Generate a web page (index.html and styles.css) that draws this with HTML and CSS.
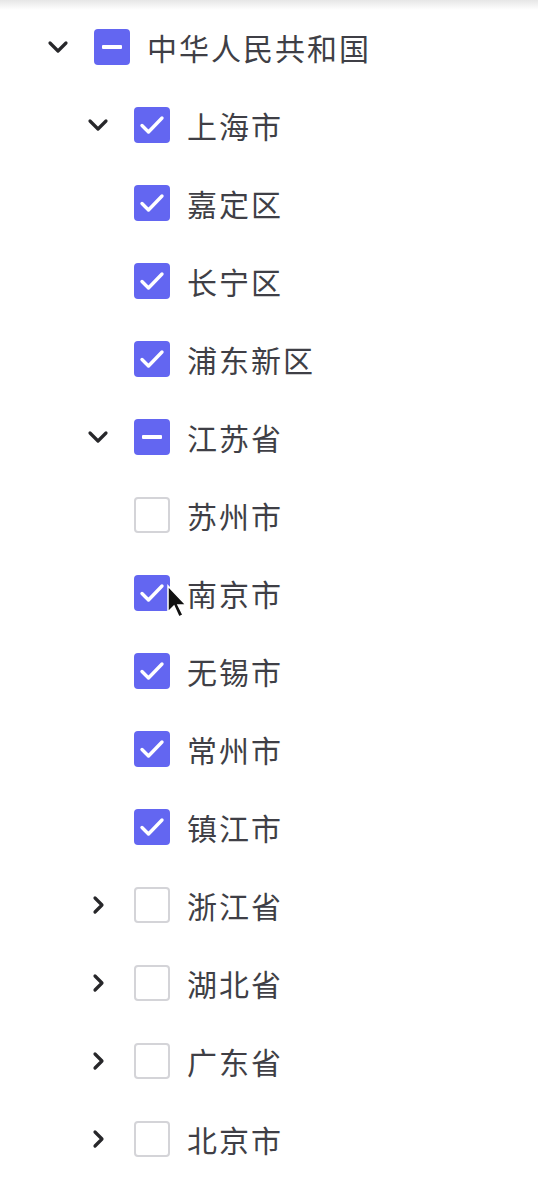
FILE: index.html
```html
<!DOCTYPE html>
<html lang="zh-CN">
<head>
    <meta charset="UTF-8" />
    <meta name="viewport" content="width=device-width, initial-scale=1.0" />
    <title>Tree</title>
    <link rel="stylesheet" href="styles.css">
</head>
<body>
    <div class="tree">
        <ul class="tree-list">
            <li>
                <div class="tree-row">
                    <span class="toggle"><svg viewBox="0 0 24 24"><path d="M4 8l8 8 8-8" /></svg></span>
                    <span class="box partial"></span>
                    <span class="label">中华人民共和国</span>
                </div>
                <ul class="tree-list children">
                    <li>
                        <div class="tree-row">
                            <span class="toggle"><svg viewBox="0 0 24 24"><path d="M4 8l8 8 8-8" /></svg></span>
                            <span class="box checked"><svg viewBox="0 0 36 36"><path d="M8 18.5l6.5 6.5L28 11" /></svg></span>
                            <span class="label">上海市</span>
                        </div>
                        <ul class="tree-list children">
                            <li><div class="tree-row leaf"><span class="box checked"><svg viewBox="0 0 36 36"><path d="M8 18.5l6.5 6.5L28 11" /></svg></span><span class="label">嘉定区</span></div></li>
                            <li><div class="tree-row leaf"><span class="box checked"><svg viewBox="0 0 36 36"><path d="M8 18.5l6.5 6.5L28 11" /></svg></span><span class="label">长宁区</span></div></li>
                            <li><div class="tree-row leaf"><span class="box checked"><svg viewBox="0 0 36 36"><path d="M8 18.5l6.5 6.5L28 11" /></svg></span><span class="label">浦东新区</span></div></li>
                        </ul>
                    </li>
                    <li>
                        <div class="tree-row">
                            <span class="toggle"><svg viewBox="0 0 24 24"><path d="M4 8l8 8 8-8" /></svg></span>
                            <span class="box partial"></span>
                            <span class="label">江苏省</span>
                        </div>
                        <ul class="tree-list children">
                            <li><div class="tree-row leaf"><span class="box"></span><span class="label">苏州市</span></div></li>
                            <li>
                                <div class="tree-row leaf">
                                    <span class="box checked"><svg viewBox="0 0 36 36"><path d="M8 18.5l6.5 6.5L28 11" /></svg></span><span class="label">南京市</span>
                                    <!-- mouse pointer from the capture -->
                                    <svg class="cursor" viewBox="0 0 20 34"><path d="M2 2v26l6-6 5 11 4-2-5-10h8z" /></svg>
                                </div>
                            </li>
                            <li><div class="tree-row leaf"><span class="box checked"><svg viewBox="0 0 36 36"><path d="M8 18.5l6.5 6.5L28 11" /></svg></span><span class="label">无锡市</span></div></li>
                            <li><div class="tree-row leaf"><span class="box checked"><svg viewBox="0 0 36 36"><path d="M8 18.5l6.5 6.5L28 11" /></svg></span><span class="label">常州市</span></div></li>
                            <li><div class="tree-row leaf"><span class="box checked"><svg viewBox="0 0 36 36"><path d="M8 18.5l6.5 6.5L28 11" /></svg></span><span class="label">镇江市</span></div></li>
                        </ul>
                    </li>
                    <li>
                        <div class="tree-row">
                            <span class="toggle"><svg viewBox="0 0 24 24"><path d="M9 5l7 7-7 7" /></svg></span>
                            <span class="box"></span>
                            <span class="label">浙江省</span>
                        </div>
                    </li>
                    <li>
                        <div class="tree-row">
                            <span class="toggle"><svg viewBox="0 0 24 24"><path d="M9 5l7 7-7 7" /></svg></span>
                            <span class="box"></span>
                            <span class="label">湖北省</span>
                        </div>
                    </li>
                    <li>
                        <div class="tree-row">
                            <span class="toggle"><svg viewBox="0 0 24 24"><path d="M9 5l7 7-7 7" /></svg></span>
                            <span class="box"></span>
                            <span class="label">广东省</span>
                        </div>
                    </li>
                    <li>
                        <div class="tree-row">
                            <span class="toggle"><svg viewBox="0 0 24 24"><path d="M9 5l7 7-7 7" /></svg></span>
                            <span class="box"></span>
                            <span class="label">北京市</span>
                        </div>
                    </li>
                </ul>
            </li>
        </ul>
    </div>
</body>
</html>
```

FILE: styles.css
```css
:root {
    --primary: #6366f1;
    --text: #3f3f46;
    --border: #d4d4d8;
}

body {
    margin: 0;
    min-height: 100vh;
    font-family: "Noto Sans CJK SC", "Noto Sans", sans-serif;
    color: var(--text);
    background: linear-gradient(#e6e6e6, #ffffff 10px) no-repeat #fff;
}

.tree {
    padding: 8px 0 0 46px;
}

.tree-list {
    list-style: none;
    margin: 0;
    padding: 0;
}

.tree-list.children {
    padding-left: 40px;
}

.tree-row {
    position: relative;
    display: flex;
    align-items: center;
    height: 78px;
}

.tree-row.leaf {
    padding-left: 8px;
}

.toggle {
    width: 24px;
    height: 24px;
    margin-right: 24px;
    display: flex;
}

.toggle svg {
    width: 24px;
    height: 24px;
    fill: none;
    stroke: #27272a;
    stroke-width: 3.2;
    stroke-linecap: round;
    stroke-linejoin: round;
}

.box {
    position: relative;
    flex: none;
    display: flex;
    width: 36px;
    height: 36px;
    box-sizing: border-box;
    border: 2px solid var(--border);
    border-radius: 4px;
    background: #fff;
    margin-right: 17px;
}

.box.checked,
.box.partial {
    border: none;
    background: var(--primary);
}

.box svg {
    width: 36px;
    height: 36px;
    fill: none;
    stroke: #fff;
    stroke-width: 3.4;
    stroke-linecap: round;
    stroke-linejoin: round;
}

.box.partial::after {
    content: "";
    position: absolute;
    left: 8px;
    right: 8px;
    top: 16px;
    height: 4px;
    border-radius: 1px;
    background: #fff;
}

.label {
    font-size: 30px;
    letter-spacing: 2px;
    line-height: 1;
}

.cursor {
    position: absolute;
    left: 40px;
    top: 30px;
    width: 20px;
    height: 34px;
    fill: #111;
    stroke: #fff;
    stroke-width: 1.5;
}
```
